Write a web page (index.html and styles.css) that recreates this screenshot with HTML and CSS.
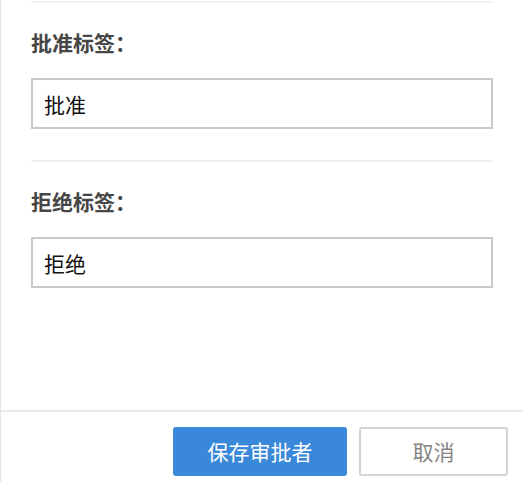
FILE: index.html
```html
<!DOCTYPE html>
<html lang="zh-CN">
<head>
<meta charset="utf-8">
<title>审批者设置</title>
<link rel="stylesheet" href="styles.css">
</head>
<body>
<div class="panel">
  <div class="main">
    <div class="prev-divider"></div>
    <div class="section section-divided">
      <div class="label">批准标签：</div>
      <input class="text-input" type="text" value="批准">
    </div>
    <div class="section">
      <div class="label">拒绝标签：</div>
      <input class="text-input" type="text" value="拒绝">
    </div>
  </div>
  <div class="footer">
    <button class="btn btn-primary" type="button">保存审批者</button>
    <button class="btn btn-default" type="button">取消</button>
  </div>
</div>
</body>
</html>
```

FILE: styles.css
```css
html, body {
  margin: 0;
  padding: 0;
  background: #ffffff;
}

body {
  font-family: "Noto Sans CJK SC", "Noto Sans", sans-serif;
}

.panel {
  height: 482px;
  box-sizing: border-box;
  border-left: 1px solid #e4e7ea;
  display: flex;
  flex-direction: column;
  overflow: hidden;
}

.main {
  flex: 1;
  padding: 0 30px;
}

.prev-divider {
  margin-top: 1px;
  border-bottom: 2px solid #f1f1f1;
}

.section {
  padding: 29px 0 31px;
  display: flex;
  flex-direction: column;
}

.section-divided {
  border-bottom: 2px solid #f1f1f1;
}

.label {
  font-size: 21px;
  line-height: 21px;
  font-weight: bold;
  color: #464646;
  margin-bottom: 25px;
}

.text-input {
  box-sizing: border-box;
  width: 100%;
  height: 51px;
  margin: 0;
  padding: 0 11px;
  border: 2px solid #c8c9cc;
  border-radius: 0;
  outline: none;
  background: #ffffff;
  font-family: "Noto Sans CJK SC", "Noto Sans", sans-serif;
  font-size: 21px;
  color: #111111;
}

.footer {
  border-top: 2px solid #ebebeb;
  padding: 15px 15px 6px;
  display: flex;
  justify-content: flex-end;
  gap: 12px;
}

.btn {
  box-sizing: border-box;
  height: 49px;
  margin: 0;
  padding: 0;
  border-radius: 3px;
  font-family: "Noto Sans CJK SC", "Noto Sans", sans-serif;
  font-size: 21px;
  line-height: 1;
  cursor: pointer;
}

.btn-primary {
  width: 174px;
  border: none;
  background: #3a88d9;
  color: #ffffff;
}

.btn-default {
  width: 149px;
  border: 2px solid #d4d4d4;
  background: #ffffff;
  color: #858585;
}
```
